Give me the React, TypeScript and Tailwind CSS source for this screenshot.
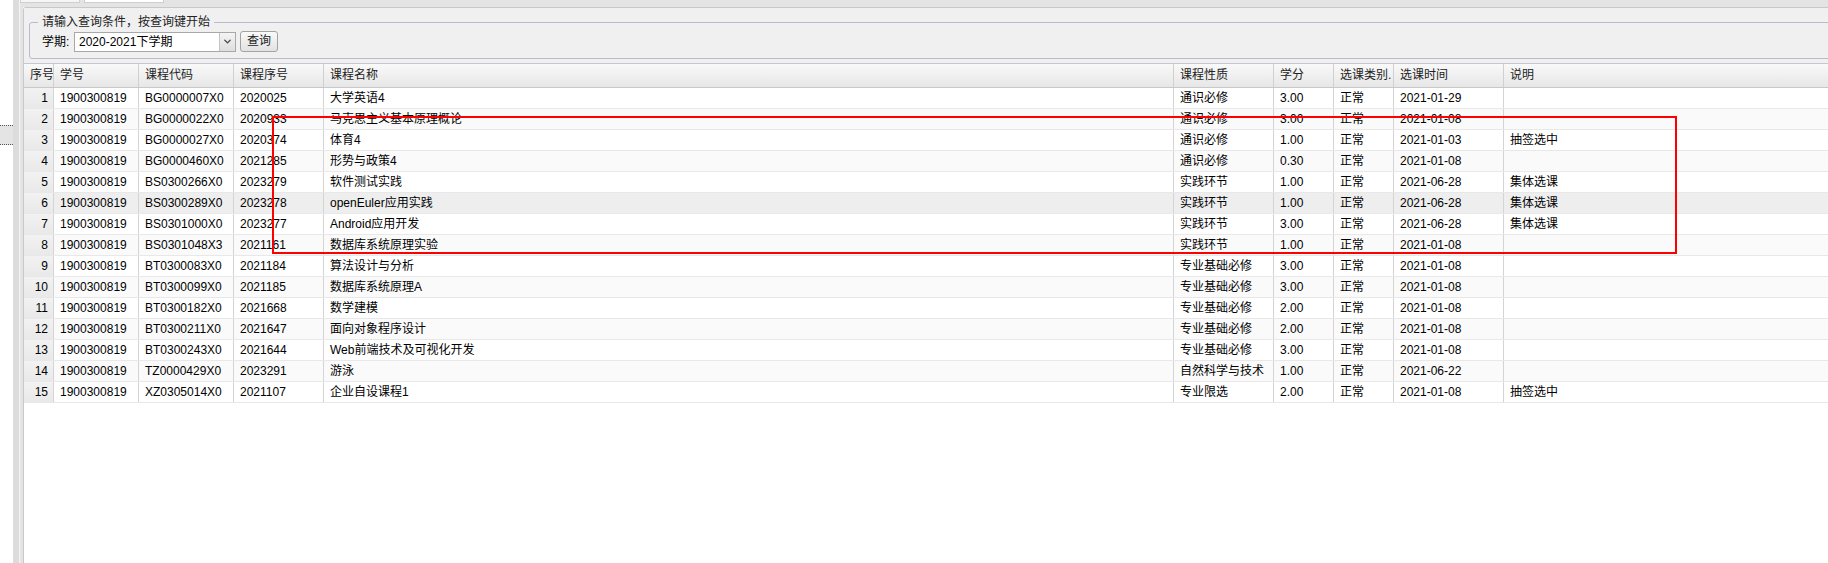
import { ChevronDown } from 'lucide-react'

const FONT = "font-['Liberation_Sans','Noto_Sans_CJK_SC',sans-serif]"

type Row = [string, string, string, string, string, string, string, string, string]

const rows: Row[] = [
  ['1900300819', 'BG0000007X0', '2020025', '大学英语4', '通识必修', '3.00', '正常', '2021-01-29', ''],
  ['1900300819', 'BG0000022X0', '2020933', '马克思主义基本原理概论', '通识必修', '3.00', '正常', '2021-01-08', ''],
  ['1900300819', 'BG0000027X0', '2020374', '体育4', '通识必修', '1.00', '正常', '2021-01-03', '抽签选中'],
  ['1900300819', 'BG0000460X0', '2021285', '形势与政策4', '通识必修', '0.30', '正常', '2021-01-08', ''],
  ['1900300819', 'BS0300266X0', '2023279', '软件测试实践', '实践环节', '1.00', '正常', '2021-06-28', '集体选课'],
  ['1900300819', 'BS0300289X0', '2023278', 'openEuler应用实践', '实践环节', '1.00', '正常', '2021-06-28', '集体选课'],
  ['1900300819', 'BS0301000X0', '2023277', 'Android应用开发', '实践环节', '3.00', '正常', '2021-06-28', '集体选课'],
  ['1900300819', 'BS0301048X3', '2021161', '数据库系统原理实验', '实践环节', '1.00', '正常', '2021-01-08', ''],
  ['1900300819', 'BT0300083X0', '2021184', '算法设计与分析', '专业基础必修', '3.00', '正常', '2021-01-08', ''],
  ['1900300819', 'BT0300099X0', '2021185', '数据库系统原理A', '专业基础必修', '3.00', '正常', '2021-01-08', ''],
  ['1900300819', 'BT0300182X0', '2021668', '数学建模', '专业基础必修', '2.00', '正常', '2021-01-08', ''],
  ['1900300819', 'BT0300211X0', '2021647', '面向对象程序设计', '专业基础必修', '2.00', '正常', '2021-01-08', ''],
  ['1900300819', 'BT0300243X0', '2021644', 'Web前端技术及可视化开发', '专业基础必修', '3.00', '正常', '2021-01-08', ''],
  ['1900300819', 'TZ0000429X0', '2023291', '游泳', '自然科学与技术', '1.00', '正常', '2021-06-22', ''],
  ['1900300819', 'XZ0305014X0', '2021107', '企业自设课程1', '专业限选', '2.00', '正常', '2021-01-08', '抽签选中'],
]

const headers = ['学号', '课程代码', '课程序号', '课程名称', '课程性质', '学分', '选课类别.', '选课时间', '说明']

// fixed column widths like the old ext grid
const COLS = 'grid grid-cols-[30px_85px_95px_90px_850px_100px_60px_60px_110px_1fr]'

export default function App() {
  return (
    <div className={`relative flex w-[1828px] h-[563px] overflow-hidden bg-white text-[12px] text-black ${FONT}`}>
      {/* collapsed nav */}
      <div className="w-[13px] shrink-0 bg-white flex flex-col">
        <div className="h-[125px]" />
        <div className="h-[20px] bg-[#e4e4e4] border-y border-dotted border-[#555]" />
      </div>
      {/* splitter */}
      <div className="w-[6px] shrink-0 bg-[#dcdcdc]" />
      <div className="w-px shrink-0 bg-[#f5f5f5]" />
      <div className="w-[3px] shrink-0 bg-[#e4e4e4]" />

      <div className="flex-1 flex flex-col min-w-0">
        {/* tab strip remains */}
        <div className="h-[7px] shrink-0 flex bg-[#e4e4e4]">
          <div className="ml-[-3px] w-[60px] h-[3px] bg-[#f6f6f6] border-x border-b border-[#cfcfcf]" />
          <div className="ml-[4px] w-[80px] h-[3px] bg-white border-x border-b border-[#cfcfcf]" />
        </div>

        <div className="flex-1 flex flex-col border-l border-t border-[#c8c8c8] rounded-tl-[3px]">
          {/* query form */}
          <div className="h-[55px] shrink-0 bg-[#f0f0f0] pl-[5px] pt-[7px]">
            <fieldset className="mr-[-20px] h-[44px] border border-[#bcb9cc] rounded-[3px] pl-[8px] pr-2">
              <legend className="px-[4px] text-[12px] leading-[14px] text-[#222]">请输入查询条件，按查询键开始</legend>
              <div className="flex items-center mt-[2px]">
                <span className="w-[36px] pl-[4px]">学期:</span>
                <div className="flex h-[20px] w-[162px] border border-[#a8a8a8] bg-white">
                  <span className="flex-1 pl-[4px] leading-[18px]">2020-2021下学期</span>
                  <span className="w-[16px] flex items-center justify-center border-l border-[#c4c4c4] bg-gradient-to-b from-[#f4f4f4] to-[#dedede]">
                    <ChevronDown size={11} strokeWidth={3} className="text-[#444]" />
                  </span>
                </div>
                <button className="ml-[4px] h-[21px] w-[38px] rounded-[3px] border border-[#a3a3a3] bg-gradient-to-b from-[#fafafa] to-[#e2e2e2] text-[12px] leading-[19px] text-[#222]">
                  查询
                </button>
              </div>
            </fieldset>
          </div>

          {/* grid */}
          <div className="flex-1 bg-white">
            <div className={`${COLS} h-[25px] border-y border-[#c8c8c8] bg-gradient-to-b from-[#f9f9f9] to-[#e7e7e7] text-[#222]`}>
              <div className="pl-[6px] leading-[23px] whitespace-nowrap overflow-hidden border-r border-[#d0d0d0]">序号</div>
              {headers.map((h, i) => (
                <div
                  key={h}
                  className={`pl-[6px] leading-[23px] whitespace-nowrap overflow-hidden ${i < headers.length - 1 ? 'border-r border-[#d0d0d0]' : ''}`}
                >
                  {h}
                </div>
              ))}
            </div>
            {rows.map((r, idx) => {
              const bg = idx === 5 ? 'bg-[#eeeeee]' : idx % 2 === 1 ? 'bg-[#fafafa]' : 'bg-white'
              return (
                <div key={idx} className={`${COLS} h-[21px] border-b border-[#e8e8e8] ${bg}`}>
                  <div className="pr-[5px] text-right leading-[20px] border-r border-[#d4d4d4] bg-gradient-to-b from-[#f2f2f2] to-[#e9e9e9]">
                    {idx + 1}
                  </div>
                  {r.map((c, j) => (
                    <div
                      key={j}
                      className={`pl-[6px] leading-[20px] whitespace-nowrap overflow-hidden ${j < r.length - 1 ? 'border-r border-[#d4d4d4]' : ''}`}
                    >
                      {c}
                    </div>
                  ))}
                </div>
              )
            })}
          </div>
        </div>
      </div>

      {/* red annotation box */}
      <div className="absolute left-[272px] top-[116px] w-[1405px] h-[138px] border-2 border-[#ff0000] pointer-events-none" />
    </div>
  )
}
